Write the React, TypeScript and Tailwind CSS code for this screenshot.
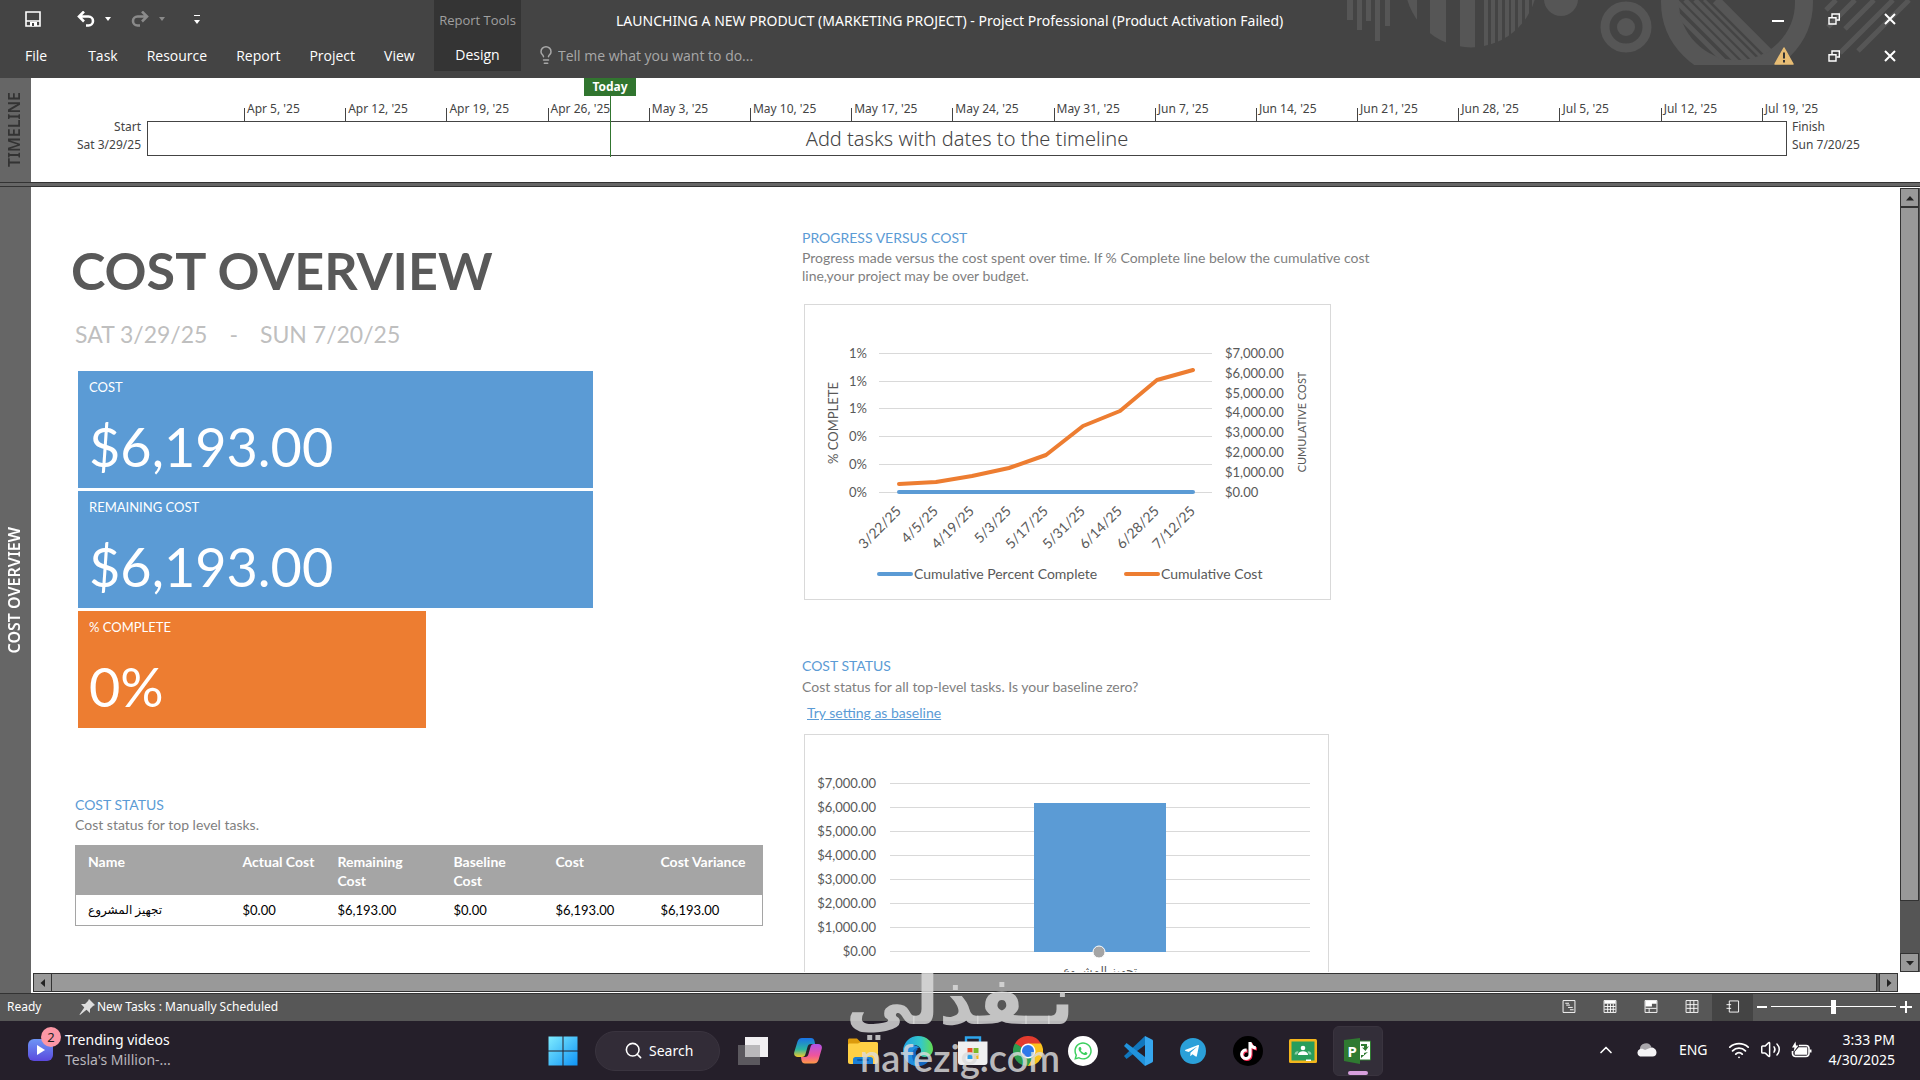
import { clsx } from 'clsx'
import { ChevronUp, Lightbulb, Search, Volume2, Wifi } from 'lucide-react'
import { FaTelegramPlane, FaTiktok, FaWhatsapp } from 'react-icons/fa'

const TABS = ['Task', 'Resource', 'Report', 'Project', 'View']

const WEEKS = [
  "Apr 5, '25", "Apr 12, '25", "Apr 19, '25", "Apr 26, '25", "May 3, '25", "May 10, '25",
  "May 17, '25", "May 24, '25", "May 31, '25", "Jun 7, '25", "Jun 14, '25", "Jun 21, '25",
  "Jun 28, '25", "Jul 5, '25", "Jul 12, '25", "Jul 19, '25",
]

const CARDS = [
  { label: 'COST', value: '$6,193.00', box: 'w-[515px] bg-[#5b9bd5]' },
  { label: 'REMAINING COST', value: '$6,193.00', box: 'w-[515px] bg-[#5b9bd5]' },
  { label: '% COMPLETE', value: '0%', box: 'w-[348px] bg-[#ed7d31]' },
]

const COLUMNS = [
  { title: 'Name', width: 'w-[155px] pr-2' },
  { title: 'Actual Cost', width: 'w-[95px] pr-2' },
  { title: 'Remaining Cost', width: 'w-[116px] pr-8' },
  { title: 'Baseline Cost', width: 'w-[102px] pr-8' },
  { title: 'Cost', width: 'w-[105px] pr-2' },
  { title: 'Cost Variance', width: 'w-[114px] pr-2' },
]

const ROW = ['$0.00', '$6,193.00', '$0.00', '$6,193.00', '$6,193.00']

const AMOUNTS = ['$7,000.00', '$6,000.00', '$5,000.00', '$4,000.00', '$3,000.00', '$2,000.00', '$1,000.00', '$0.00']

const PROGRESS = [
  { date: '3/22/25', x: 95, y: 180 },
  { date: '4/5/25', x: 132, y: 178 },
  { date: '4/19/25', x: 168, y: 172 },
  { date: '5/3/25', x: 205, y: 164 },
  { date: '5/17/25', x: 242, y: 151 },
  { date: '5/31/25', x: 279, y: 122 },
  { date: '6/14/25', x: 316, y: 107 },
  { date: '6/28/25', x: 353, y: 76 },
  { date: '7/12/25', x: 389, y: 66 },
]

function SaveIcon() {
  return (
    <svg viewBox="0 0 16 16" className="size-4" fill="none" stroke="#fff" strokeWidth="1.6">
      <path d="M1 1h14v14H1zM1 10h14" />
      <path d="M5 11h7v4H5z" fill="#fff" stroke="none" />
      <path d="M7 12h2v3H7z" fill="#444" stroke="none" />
    </svg>
  )
}

function UndoIcon({ flipped }: { flipped?: boolean }) {
  return (
    <svg viewBox="0 0 18 16" className={clsx('h-4 w-[18px]', flipped && '-scale-x-100')} fill="none" stroke={flipped ? '#8a8a8a' : '#fff'} strokeWidth="2.6">
      <path d="M7 .5 2 5.500l5 5M2.500 5.500h9a4.500 4.500 0 0 1 0 9H9" />
    </svg>
  )
}

function Caret({ color }: { color: string }) {
  return (
    <svg viewBox="0 0 6 4" className="h-1 w-1.5">
      <path d="M0 0h6L3 4z" fill={color} />
    </svg>
  )
}

function RestoreIcon() {
  return (
    <svg viewBox="0 0 12 12" className="size-3" fill="none" stroke="#fff" strokeWidth="1.4">
      <path d="M1 4.7h7v6.3H1z" />
      <path d="M4 4V1h7.3v6H8.5" />
    </svg>
  )
}

function CloseIcon() {
  return (
    <svg viewBox="0 0 12 12" className="size-3" stroke="#fff" strokeWidth="2">
      <path d="m1 1 10 10M11 1 1 11" />
    </svg>
  )
}

function HeaderArt() {
  const thin = [184, 191, 198, 205, 211, 218, 225, 232]
  return (
    <svg viewBox="0 0 620 78" className="pointer-events-none absolute right-0 top-0 h-[78px] w-[620px]" fill="#565656">
      <clipPath id="drum">
        <circle cx="171" cy="-19" r="66.4" />
      </clipPath>
      <clipPath id="wheel">
        <circle cx="437" cy="2" r="59" />
      </clipPath>
      <clipPath id="floor">
        <path d="M0 0h620v65H0z" />
      </clipPath>
      <path d="M47 0h6v20h-6zM57 0h5v30h-5zM66 0h5v21h-5zM75 0h5v41h-5zM85 0h5v26h-5z" />
      <g clipPath="url(#drum)">
        <path d="M100 0h17v60h-17zM130 0h16v60h-16zM160 0h15v60h-15z" />
        {thin.map((x) => (
          <path key={x} d={`M${x} 0h4v60h-4z`} />
        ))}
      </g>
      <circle cx="261" cy="-1" r="17" />
      <circle cx="326" cy="27" r="21" fill="none" stroke="#565656" strokeWidth="9" />
      <circle cx="326" cy="27" r="9" />
      <g clipPath="url(#floor)">
        <circle cx="437" cy="2" r="67" fill="none" stroke="#565656" strokeWidth="18" />
      </g>
      <g clipPath="url(#wheel)" stroke="#565656">
        <path d="m363 0 70 70M375 0l70 70M385 0l70 70M395 0l70 70" strokeWidth="5" />
        <path d="m404 0 70 70" strokeWidth="3" />
        <path d="m416 0 70 70" strokeWidth="9" />
      </g>
      <path d="m526 10 10-10M528 27l27-27M545 29l29-29M540 53l53-53M558 51l51-51" stroke="#565656" strokeWidth="5" />
    </svg>
  )
}

function TitleBar() {
  return (
    <header className="relative flex h-[78px] shrink-0 bg-[#444] font-['Open_Sans',sans-serif] text-[14px] text-white">
      <HeaderArt />
      <div className="w-[434px] shrink-0">
        <div className="flex h-[38px] items-center pl-[25px]">
          <button aria-label="Save"><SaveIcon /></button>
          <button aria-label="Undo" className="ml-9"><UndoIcon /></button>
          <button aria-label="Undo history" className="ml-2.5"><Caret color="#fff" /></button>
          <button aria-label="Redo" className="ml-5"><UndoIcon flipped /></button>
          <button aria-label="Redo history" className="ml-2.5"><Caret color="#8a8a8a" /></button>
          <button aria-label="Customize quick access" className="ml-[29px] flex flex-col items-center gap-1">
            <span className="h-px w-1.5 bg-white" />
            <Caret color="#fff" />
          </button>
        </div>
        <nav className="flex h-[34px] items-center gap-[29px] pl-[25px]">
          <button className="mr-3">File</button>
          {TABS.map((tab) => (
            <button key={tab}>{tab}</button>
          ))}
        </nav>
      </div>
      <div className="flex h-[71px] w-[87px] shrink-0 flex-col items-center bg-[#343434]">
        <span className="mt-2 text-[13px] leading-6 text-[#a0a0a0]">Report Tools</span>
        <button className="mt-3 leading-[22px]">Design</button>
      </div>
      <div className="min-w-0 flex-1">
        <h1 className="flex h-10 items-center whitespace-nowrap pl-[95px] font-['Noto_Sans',sans-serif]">
          LAUNCHING A NEW PRODUCT (MARKETING PROJECT) - Project Professional (Product Activation Failed)
        </h1>
        <label className="flex h-[30px] items-center gap-0.5 pl-[15px] text-[#a8a8a8]">
          <Lightbulb className="size-5" strokeWidth={1.8} />
          <input className="w-64 placeholder-[#a8a8a8] outline-none" aria-label="Tell me" placeholder="Tell me what you want to do..." />
        </label>
      </div>
      <div className="relative grid h-[74px] shrink-0 grid-cols-3 grid-rows-2 pr-0.5">
        <button aria-label="Minimize" className="flex w-14 items-center justify-center pt-1"><span className="h-0.5 w-3 bg-white" /></button>
        <button aria-label="Restore" className="flex w-14 items-center justify-center"><RestoreIcon /></button>
        <button aria-label="Close" className="flex w-14 items-center justify-center"><CloseIcon /></button>
        <button aria-label="Activation warning" className="flex items-center justify-center pl-3">
          <svg viewBox="0 0 20 18" className="h-[18px] w-5">
            <path d="M10 1 19 17H1z" fill="#e8bd74" stroke="#e8bd74" strokeWidth="1.5" strokeLinejoin="round" />
            <path d="M9 5.5h2v6H9zM9 13h2v2.4H9z" fill="#333" />
          </svg>
        </button>
        <button aria-label="Restore project" className="flex items-center justify-center"><RestoreIcon /></button>
        <button aria-label="Close project" className="flex items-center justify-center"><CloseIcon /></button>
      </div>
    </header>
  )
}

function SideLabel({ children, className }: { children: string; className: string }) {
  return (
    <div className={clsx('flex w-[31px] shrink-0 items-center justify-center bg-[#666] pr-1 text-[16px]', className)}>
      <span className="rotate-180 whitespace-nowrap leading-6 [writing-mode:vertical-rl]">{children}</span>
    </div>
  )
}

function Timeline() {
  return (
    <section className="flex h-[104px] shrink-0 bg-white text-[12px] text-[#444]">
      <SideLabel className="font-semibold text-[#333]">TIMELINE</SideLabel>
      <div className="w-[116px] shrink-0 pr-1.5 pt-10 text-right leading-[18px]">
        <div>Start</div>
        <div>Sat 3/29/25</div>
      </div>
      <div className="relative min-w-0 flex-1 pt-[30px]">
        <div className="-mr-[76px] ml-[97px] grid grid-cols-16">
          {WEEKS.map((week) => (
            <div key={week} className="relative h-[13px] whitespace-nowrap border-l border-[#444]">
              <span className="absolute -top-2 left-0.5 leading-[18px]">{week}</span>
            </div>
          ))}
        </div>
        <div className="flex h-[35px] items-center justify-center border border-[#444] text-[20px] font-light">
          Add tasks with dates to the timeline
        </div>
        <div className="absolute left-[437px] top-0 flex h-[79px] w-[52px] flex-col items-center">
          <span className="w-full bg-[#31752f] text-center font-bold leading-[18px] text-white">Today</span>
          <span className="w-px flex-1 bg-[#31752f]" />
        </div>
      </div>
      <div className="w-[133px] shrink-0 pl-[5px] pt-10 leading-[18px]">
        <div>Finish</div>
        <div>Sun 7/20/25</div>
      </div>
    </section>
  )
}

function SectionHeading({ children }: { children: string }) {
  return <h3 className="text-[14px] leading-5 text-[#5b9bd5]">{children}</h3>
}

function ProgressChart() {
  return (
    <svg viewBox="0 0 527 296" className="mt-[19px] ml-0.5 h-[296px] w-[527px]" fontSize="13" fill="#595959">
      <rect x="0.5" y="0.5" width="526" height="295" fill="#fff" stroke="#d9d9d9" />
      {[1, 1, 1, 0, 0, 0].map((value, i) => (
        <g key={i}>
          <path d={`M75 ${Math.round(i * 27.7) + 49.5}h333`} stroke="#d9d9d9" />
          <text x="63" y={Math.round(i * 27.7) + 54} textAnchor="end">{value}%</text>
        </g>
      ))}
      {AMOUNTS.map((amount, i) => (
        <text key={amount} x="421" y={Math.round(i * 19.8) + 54}>{amount}</text>
      ))}
      <text transform="translate(34 119) rotate(-90)" textAnchor="middle">% COMPLETE</text>
      <text transform="translate(502 118) rotate(-90)" textAnchor="middle" fontSize="11">CUMULATIVE COST</text>
      <path d="M95 188h294" stroke="#5b9bd5" strokeWidth="4" strokeLinecap="round" />
      <polyline points={PROGRESS.map((p) => `${p.x},${p.y}`).join(' ')} fill="none" stroke="#ed7d31" strokeWidth="4" strokeLinecap="round" strokeLinejoin="round" />
      {PROGRESS.map((p) => (
        <text key={p.date} transform={`translate(${p.x + 3} 208) rotate(-45)`} textAnchor="end" fontSize="14">{p.date}</text>
      ))}
      <path d="M75 270h32" stroke="#5b9bd5" strokeWidth="4" strokeLinecap="round" />
      <text x="110" y="275" fontSize="14">Cumulative Percent Complete</text>
      <path d="M322 270h32" stroke="#ed7d31" strokeWidth="4" strokeLinecap="round" />
      <text x="357" y="275" fontSize="14">Cumulative Cost</text>
    </svg>
  )
}

function CostChart() {
  return (
    <svg viewBox="0 0 525 300" className="mt-3 ml-0.5 h-[300px] w-[525px] shrink-0" fontSize="13" fill="#595959">
      <rect x="0.5" y="0.5" width="524" height="299" fill="#fff" stroke="#d9d9d9" />
      {AMOUNTS.map((amount, i) => (
        <g key={amount}>
          <path d={`M86 ${i * 24 + 49.5}h420`} stroke="#d9d9d9" />
          <text x="72" y={i * 24 + 54} textAnchor="end">{amount}</text>
        </g>
      ))}
      <path d="M230 69h132v149H230z" fill="#5b9bd5" />
      <circle cx="295" cy="218" r="6" fill="#a5a5a5" stroke="#fff" />
      <text x="296" y="241" textAnchor="middle" fontSize="12">تجهيز المشروع</text>
    </svg>
  )
}

function Report() {
  return (
    <main className="flex min-h-0 flex-1 overflow-hidden bg-white font-[Lato,'DejaVu_Sans',sans-serif]">
      <div className="w-[771px] shrink-0 pl-10 pt-[51px]">
        <h2 className="text-[52px] font-bold leading-[64px] text-[#595959]">COST OVERVIEW</h2>
        <div className="ml-1 mt-4 flex gap-[22px] text-[23px] leading-8 text-[#bfbfbf]">
          <span>SAT 3/29/25</span>
          <span>-</span>
          <span>SUN 7/20/25</span>
        </div>
        <div className="ml-[7px] mt-[21px] flex flex-col gap-[3px]">
          {CARDS.map((card) => (
            <div key={card.label} className={clsx('h-[117px] px-[11px] pt-2 text-white', card.box)}>
              <div className="text-[13px] leading-4">{card.label}</div>
              <div className="mt-6 text-[54px] leading-[56px]">{card.value}</div>
            </div>
          ))}
        </div>
        <div className="ml-1 mt-[67px]">
          <SectionHeading>COST STATUS</SectionHeading>
          <p className="text-[14px] leading-5 text-[#7f7f7f]">Cost status for top level tasks.</p>
          <table className="mt-2.5 w-[687px] table-fixed border-collapse border border-[#a5a5a5] text-left">
            <thead className="bg-[#a5a5a5] text-[14px] text-white">
              <tr>
                {COLUMNS.map((col) => (
                  <th key={col.title} className={clsx('pb-[5px] pl-3 pt-1.5 align-top leading-[19px]', col.width)}>{col.title}</th>
                ))}
              </tr>
            </thead>
            <tbody className="text-[13px] text-black">
              <tr>
                <td className="py-1.5 pl-3 text-[12px] leading-[18px]">تجهيز المشروع</td>
                {ROW.map((cell, i) => (
                  <td key={i} className="py-1.5 pl-3 leading-[18px]">{cell}</td>
                ))}
              </tr>
            </tbody>
          </table>
        </div>
      </div>

      <div className="w-[600px] shrink-0 pt-[41px] text-[14px] leading-[18px] text-[#7f7f7f]">
        <SectionHeading>PROGRESS VERSUS COST</SectionHeading>
        <p className="pt-px">
          Progress made versus the cost spent over time. If % Complete line below the cumulative cost
          <br />
          line,your project may be over budget.
        </p>
        <ProgressChart />
        <div className="mt-14">
          <SectionHeading>COST STATUS</SectionHeading>
          <p className="pt-0.5">Cost status for all top-level tasks. Is your baseline zero?</p>
          <a href="#baseline" className="ml-[5px] mt-2 block w-fit text-[#5b9bd5] underline">Try setting as baseline</a>
        </div>
        <CostChart />
      </div>
    </main>
  )
}

function ScrollButton({ direction, label }: { direction: string; label: string }) {
  return (
    <button aria-label={label} className="flex size-[19px] shrink-0 items-center justify-center border border-[#333] bg-[#999]">
      <svg viewBox="0 0 10 10" className="size-2.5">
        <path d={direction} fill="#222" />
      </svg>
    </button>
  )
}

function Workspace() {
  return (
    <section className="flex min-h-0 flex-1">
      <SideLabel className="font-semibold text-white">COST OVERVIEW</SideLabel>
      <div className="flex min-w-0 flex-1 flex-col bg-white">
        <div className="flex min-h-0 flex-1">
          <Report />
          <div className="mt-px flex w-5 shrink-0 flex-col bg-[#555]">
            <ScrollButton label="Scroll up" direction="M1 7.5h8L5 3z" />
            <div className="h-[694px] w-[19px] border border-[#333] bg-[#999]" />
            <div className="flex-1" />
            <ScrollButton label="Scroll down" direction="M1 3h8L5 7.5z" />
          </div>
        </div>
        <div className="mb-px ml-0.5 mr-[22px] mt-px flex h-[19px] shrink-0 gap-0.5 bg-[#555]">
          <ScrollButton label="Scroll left" direction="M7 1v8L2.5 5z" />
          <div className="-ml-[3px] flex-1 border border-[#333] bg-[#999]" />
          <ScrollButton label="Scroll right" direction="M3 1v8l4.500-4z" />
        </div>
      </div>
    </section>
  )
}

const VIEWS = [
  { name: 'Gantt Chart', lines: 'M3 3.500h4M4 5.500h4M6 8h5M8 10.500h4', fill: '' },
  { name: 'Task Usage', lines: 'M1 7h12M1 10h12M4.500 4v9M7.500 4v9M10.500 4v9', fill: 'M1 1h12v3H1z' },
  { name: 'Team Planner', lines: 'M1 9h12M5 9v4', fill: 'M1 1h12v3H8v3H1z' },
  { name: 'Resource Sheet', lines: 'M1 5h12M1 9h12M5 1v12M9 1v12', fill: '' },
  { name: 'Report', lines: 'M0 5h5M0 9h5', fill: '' },
]

function StatusBar() {
  return (
    <footer className="flex h-7 shrink-0 items-stretch border-t border-[#333] bg-[#575757] text-[12px] text-white">
      <span className="w-[79px] self-center pb-0.5 pl-[7px]">Ready</span>
      <button className="flex items-center gap-0.5 pb-0.5">
        <svg viewBox="0 0 16 16" className="size-4" fill="#ddd">
          <path d="m10 0 6 6-2 1-3 3v4L7.500 10.700 1 16l-.5-.5L5.300 8.500 2 5h4l3-3z" />
        </svg>
        New Tasks : Manually Scheduled
      </button>
      <div className="ml-auto flex">
        {VIEWS.map((view) => (
          <button key={view.name} aria-label={view.name} className={clsx('flex w-[41px] items-center justify-center pb-0.5', view.name === 'Report' && 'bg-[#444]')}>
            <svg viewBox="0 0 14 14" className="h-[13px] w-3.5" fill="none" stroke="#fff">
              <path d={view.name === 'Report' ? 'M3 1h10v12H3z' : 'M.6.6h12.800v12.800H.6z'} />
              <path d={view.lines} />
              <path d={view.fill} fill="#fff" stroke="none" />
            </svg>
          </button>
        ))}
      </div>
      <div className="flex items-center gap-1 pb-0.5 pl-1 pr-2">
        <button aria-label="Zoom out" className="flex h-4 w-2.5 items-center"><span className="h-0.5 w-full bg-white" /></button>
        <input
          type="range"
          aria-label="Zoom"
          defaultValue={50}
          className="h-px w-[125px] appearance-none bg-white [&::-webkit-slider-thumb]:h-3.5 [&::-webkit-slider-thumb]:w-[5px] [&::-webkit-slider-thumb]:appearance-none [&::-webkit-slider-thumb]:bg-white"
        />
        <button aria-label="Zoom in">
          <svg viewBox="0 0 12 12" className="size-3" stroke="#fff" strokeWidth="2"><path d="M0 6h12M6 0v12" /></svg>
        </button>
      </div>
    </footer>
  )
}

function Slot({ label, active, children }: { label: string; active?: boolean; children: React.ReactNode }) {
  return (
    <button aria-label={label} className="flex w-[55px] items-center justify-center">
      <span className={clsx('relative flex size-[50px] items-center justify-center', active && 'rounded-md border border-[#3a343f] bg-[#332e39]')}>
        {children}
        {active && <span className="absolute bottom-0 h-1 w-5 rounded-full bg-[#d79fdd]" />}
      </span>
    </button>
  )
}

function TaskbarApps() {
  return (
    <div className="flex">
      <Slot label="Start">
        <svg viewBox="0 0 30 30" className="size-[30px]">
          <linearGradient id="win" x1="0" y1="0" x2="1" y2="1">
            <stop offset="0" stopColor="#7fecff" />
            <stop offset="1" stopColor="#0f93f5" />
          </linearGradient>
          <path d="M.5.5h14v14H.5zM15.500.5h14v14h-14zM.5 15.500h14v14H.5zM15.500 15.500h14v14h-14z" fill="url(#win)" />
        </svg>
      </Slot>
      <button className="mx-[5px] flex h-10 w-[125px] items-center gap-1.5 self-center rounded-full border border-[#3a343f] bg-[#322c37] pl-7 text-[14px] text-white">
        <Search className="size-[19px]" />
        Search
      </button>
      <Slot label="Task view">
        <svg viewBox="0 0 30 28" className="h-7 w-[30px]">
          <path d="M0 8h22v20H0z" fill="#5b585e" />
          <path d="M7 0h23v20H7z" fill="#f1eff2" />
          <path d="M7 8h15v12H7z" fill="#bab8bb" />
        </svg>
      </Slot>
      <Slot label="Copilot">
        <svg viewBox="0 0 28 26" className="h-[26px] w-7">
          <linearGradient id="cpA" x1="0" y1="0" x2="0" y2="1">
            <stop offset="0" stopColor="#1a72e8" />
            <stop offset=".6" stopColor="#2bb5a0" />
            <stop offset="1" stopColor="#f5c92a" />
          </linearGradient>
          <linearGradient id="cpB" x1="0" y1="0" x2="0" y2="1">
            <stop offset="0" stopColor="#b052e8" />
            <stop offset=".6" stopColor="#f0559a" />
            <stop offset="1" stopColor="#ff9a45" />
          </linearGradient>
          <path d="M8 0h9c2 0 3 1 3.500 3l.5 3h-4c-2 0-3 1-3.500 3l-2 7c-.5 2-1.500 3-3.500 3H4c-3 0-4.500-2-3.700-5L3.500 3.500C4.300 1 6 0 8 0z" fill="url(#cpA)" />
          <path d="M20 25.500h-9c-2 0-3-1-3.500-3L7 19h4c2 0 3-1 3.500-3l2-7c.5-2 1.500-3 3.500-3h4c3 0 4.500 2 3.700 5l-3.200 11c-.8 2.500-2.500 3.500-4.500 3.500z" fill="url(#cpB)" />
        </svg>
      </Slot>
      <Slot label="File Explorer">
        <svg viewBox="0 0 30 26" className="h-[26px] w-[30px]">
          <path d="M0 2c0-1 .6-1.600 1.600-1.600H9L12.500 4H28c1.200 0 2 .8 2 2v8H0z" fill="#dc9a0c" />
          <path d="M0 7.500C0 6 .6 5.500 2 5.500h8L13 4h15c1.300 0 2 .7 2 2v18c0 1.300-.7 2-2 2H2c-1.300 0-2-.7-2-2z" fill="#ffd045" />
          <path d="M5 26v-4.500C5 20 6 19 7.500 19h15c1.500 0 2.500 1 2.500 2.500V26z" fill="#1a7fd6" />
          <path d="M10 22h10" stroke="#0c5aa6" strokeWidth="2" strokeLinecap="round" />
        </svg>
      </Slot>
      <Slot label="Edge">
        <svg viewBox="0 0 30 30" className="size-[30px]">
          <linearGradient id="edgeTop" x1="0" y1="0" x2="1" y2="0">
            <stop offset="0" stopColor="#1f9fe4" />
            <stop offset=".6" stopColor="#35c8c8" />
            <stop offset="1" stopColor="#63dd50" />
          </linearGradient>
          <path d="M0 15C0 24 7 30 15 30c5 0 9-2 11-6-3 1-8 1-11-2-3-3-3-7 0-9L10 8z" fill="#1468c0" />
          <path d="M0 14C1 6 7 0 15 0c9 0 15 6 15 13 0 5-4 8-8 8-3 0-5-1-5-2.500 0-1 1-1.500 1-4 0-3-3-5.500-7-5.500-6 0-10 3-11 5z" fill="url(#edgeTop)" />
          <path d="M0 14c1-3 5-5 9-5 3 0 6 1 8 3-5-1-8 3-8 7 0 5 3 9 7 11h-1C6 30 0 23 0 14z" fill="#1f8fe0" />
        </svg>
      </Slot>
      <Slot label="Microsoft Store">
        <svg viewBox="0 0 30 30" className="size-[30px]">
          <path d="M8 6V1.500h14V6" fill="none" stroke="#2ea5ec" strokeWidth="2.400" />
          <path d="M0 5.500h29.500V26c0 2-1 3-3 3H3c-2 0-3-1-3-3z" fill="#f0f0f1" />
          <path d="M9.500 12h5v5h-5z" fill="#e8502c" />
          <path d="M15.500 12h5v5h-5z" fill="#7ab928" />
          <path d="M9.500 18h5v5h-5z" fill="#2ba1e6" />
          <path d="M15.500 18h5v5h-5z" fill="#f8b51e" />
        </svg>
      </Slot>
      <Slot label="Chrome">
        <svg viewBox="0 0 30 30" className="size-[30px]">
          <path d="M15 15 2 7.500A15 15 0 0 1 28 7.500z" fill="#e33b2e" />
          <path d="M15 15V7.500h13A15 15 0 0 1 15 30z" fill="#fcc31e" />
          <path d="M2 7.500A15 15 0 0 0 15 30l6.500-11.300L15 15z" fill="#2d9d4f" />
          <path d="M2 7.500h13V15z" fill="#e33b2e" />
          <path d="m2 7.500 6.500 11.300L15 15z" fill="#2d9d4f" />
          <circle cx="15" cy="15" r="7.500" fill="#fff" />
          <circle cx="15" cy="15" r="6" fill="#2f78ea" />
        </svg>
      </Slot>
      <Slot label="WhatsApp">
        <span className="flex size-[30px] items-center justify-center rounded-full bg-white text-[#3ccf5e]"><FaWhatsapp className="size-5" /></span>
      </Slot>
      <Slot label="Visual Studio Code">
        <svg viewBox="0 0 30 30" className="size-[30px]">
          <path d="M22 0 1 20l2.500 3L22 9z" fill="#1177bd" />
          <path d="M22 30 1 10l2.500-3L22 21z" fill="#2193dc" />
          <path d="M22 0l7 3.500c.6.300 1 .8 1 1.500v20c0 .7-.4 1.200-1 1.500L22 30z" fill="#36a6ee" />
        </svg>
      </Slot>
      <Slot label="Telegram">
        <span className="flex size-[26px] items-center justify-center rounded-full bg-[#2ba0d9] text-white"><FaTelegramPlane className="mr-0.5 size-4" /></span>
      </Slot>
      <Slot label="TikTok">
        <span className="flex size-[30px] items-center justify-center rounded-full bg-black text-white">
          <FaTiktok className="size-[18px] drop-shadow-[1px_1px_0_#ff2d55]" />
        </span>
      </Slot>
      <Slot label="Classroom">
        <svg viewBox="0 0 28 24" className="h-6 w-7">
          <rect width="28" height="24" rx="1.500" fill="#f4b61c" />
          <path d="M2.500 2.500h23v19h-23z" fill="#2a9d5c" />
          <circle cx="14" cy="9" r="2.300" fill="#fff" />
          <path d="M9 16c0-5 10-5 10 0z" fill="#fff" />
          <path d="M5.500 15.500c0-3 3-4 4-3l-1.500 3zM22.500 15.500c0-3-3-4-4-3l1.500 3z" fill="#8fd0aa" />
          <path d="M17 20.500h5v1.500h-5z" fill="#fff" />
        </svg>
      </Slot>
      <Slot label="Project" active>
        <svg viewBox="0 0 28 26" className="h-[26px] w-7">
          <path d="M14 3h12.500v19H14z" fill="#fff" stroke="#2f7a31" />
          <path d="M17 6h6v3l2-1-3.500 5L18 9.500l2 .2V8h-3zM24 14l-4 1v2h-3v3" fill="#2f7a31" />
          <path d="M0 2 16 0v26L0 23z" fill="#2f7a31" />
          <text x="3.500" y="18.500" fontSize="15" fontWeight="700" fill="#fff">P</text>
        </svg>
      </Slot>
    </div>
  )
}

function Taskbar() {
  return (
    <footer className="grid h-[59px] shrink-0 grid-cols-[1fr_auto_1fr] bg-[#251f2a] text-[14px] text-white">
      <button className="flex items-center gap-3 pb-0.5 pl-7 text-left leading-5">
        <span className="relative flex h-[22px] w-[25px] items-center justify-center rounded-md bg-gradient-to-b from-[#6d95f5] to-[#5b48dd]">
          <svg viewBox="0 0 8 10" className="h-2.5 w-2"><path d="m0 0 8 5-8 5z" fill="#fff" /></svg>
          <span className="absolute -right-2 -top-3 size-5 rounded-full bg-[#fc97a6] text-center text-[13px] text-[#222]">2</span>
        </span>
        <span>
          <span className="block">Trending videos</span>
          <span className="block text-[#b9b6bc]">Tesla's Million-...</span>
        </span>
      </button>
      <TaskbarApps />
      <div className="flex items-center justify-end pb-0.5 pr-[25px]">
        <button aria-label="Hidden icons"><ChevronUp className="size-5" /></button>
        <button aria-label="OneDrive" className="ml-5">
          <svg viewBox="0 0 21 14" className="h-3.5 w-[21px]">
            <path d="M4 7a6 6 0 0 1 11.500-3l-7 6z" fill="#a9a6ab" />
            <path d="M4 13.500a4 4 0 0 1 0-7.500c2-.8 3.500 0 5 1l6-2.500c3 0 5.500 2 5.500 5 0 2.500-1.500 4-4 4z" fill="#f4f3f5" />
          </svg>
        </button>
        <button className="ml-[22px]">ENG</button>
        <button aria-label="Network, volume and battery" className="ml-5 flex items-center gap-2.5">
          <Wifi className="size-[22px]" />
          <Volume2 className="size-[21px]" strokeWidth={1.7} />
          <svg viewBox="0 0 22 18" className="h-[18px] w-[22px]" fill="none" stroke="#fff" strokeWidth="1.600">
            <path d="M8 4.500h7a3 3 0 0 1 3 3v5a3 3 0 0 1-3 3H4.500a3 3 0 0 1-3-3V10" />
            <path d="M8 7h7.500v6H4.500v-2z" fill="#fff" />
            <path d="M19.500 8.500v3" strokeWidth="2" />
            <path d="M4.500.5 1 6.500h2.500L2.500 11l5-6.500H5z" fill="#fff" stroke="none" />
          </svg>
        </button>
        <button className="ml-4 text-right leading-5">
          <span className="block">3:33 PM</span>
          <span className="block">4/30/2025</span>
        </button>
      </div>
    </footer>
  )
}

function Watermark() {
  return (
    <svg viewBox="0 0 240 116" className="pointer-events-none absolute bottom-0 left-1/2 h-[116px] w-60 -translate-x-1/2" fill="#dcdcdc" fillOpacity=".82" textAnchor="middle">
      <text x="120" y="60" fontSize="67" fontWeight="700" className="font-['DejaVu_Sans']">نـفذلي</text>
      <text x="120" y="108" fontSize="38" fontWeight="600" className="font-[Lato]">nafezig.com</text>
    </svg>
  )
}

export default function App() {
  return (
    <div className="relative flex h-screen flex-col overflow-hidden bg-[#444] font-['Noto_Sans','DejaVu_Sans',sans-serif]">
      <TitleBar />
      <Timeline />
      <div className="h-[5px] shrink-0 border-y border-[#333] bg-[#666]" />
      <Workspace />
      <StatusBar />
      <Taskbar />
      <Watermark />
    </div>
  )
}
